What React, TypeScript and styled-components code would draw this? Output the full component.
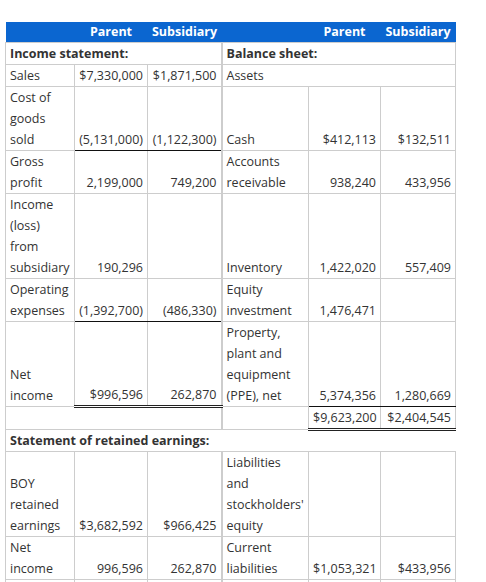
import React from 'react';
import styled, { createGlobalStyle } from 'styled-components';

type Rule = 'single' | 'double' | undefined;

type Line = { label: string; parent: string; sub: string; rule?: Rule };
type Side =
  | { kind: 'line'; line: Line }
  | { kind: 'section'; text: string; open?: boolean }
  | { kind: 'span'; text: string }
  | { kind: 'none' };

const line = (label: string, parent: string, sub: string, rule?: Rule): Side => ({
  kind: 'line',
  line: { label, parent, sub, rule },
});

const rows: { left: Side; right: Side }[] = [
  { left: { kind: 'section', text: 'Income statement:' }, right: { kind: 'section', text: 'Balance sheet:' } },
  { left: line('Sales', '$7,330,000', '$1,871,500'), right: { kind: 'span', text: 'Assets' } },
  { left: line('Cost of goods sold', '(5,131,000)', '(1,122,300)', 'single'), right: line('Cash', '$412,113', '$132,511') },
  { left: line('Gross profit', '2,199,000', '749,200'), right: line('Accounts receivable', '938,240', '433,956') },
  { left: line('Income (loss) from subsidiary', '190,296', ''), right: line('Inventory', '1,422,020', '557,409') },
  { left: line('Operating expenses', '(1,392,700)', '(486,330)', 'single'), right: line('Equity investment', '1,476,471', '') },
  {
    left: line('Net income', '$996,596', '262,870', 'double'),
    right: line('Property, plant and equipment (PPE), net', '5,374,356', '1,280,669', 'single'),
  },
  { left: { kind: 'span', text: '' }, right: line('', '$9,623,200', '$2,404,545', 'double') },
  { left: { kind: 'section', text: 'Statement of retained earnings:', open: true }, right: { kind: 'none' } },
  { left: line('BOY retained earnings', '$3,682,592', '$966,425'), right: line("Liabilities and stockholders' equity", '', '') },
  { left: line('Net income', '996,596', '262,870'), right: line('Current liabilities', '$1,053,321', '$433,956') },
  // next row starts right at the fold; only its borders show
  { left: line('', '', ''), right: line('', '', '') },
];

const widths = [69, 73, 74, 87, 72, 75];

function renderSide(side: Side, split: boolean, key: string) {
  switch (side.kind) {
    case 'section':
      return (
        <SectionCell key={key} colSpan={3} $split={split} $open={side.open}>
          {side.text}
        </SectionCell>
      );
    case 'span':
      return (
        <LabelCell key={key} colSpan={3} $split={split}>
          {side.text}
        </LabelCell>
      );
    case 'none':
      return null;
    default:
      return [
        <LabelCell key={key + 'l'} $split={split}>
          {side.line.label}
        </LabelCell>,
        <NumCell key={key + 'p'} $rule={side.line.rule}>
          {side.line.parent}
        </NumCell>,
        <NumCell key={key + 's'} $rule={side.line.rule}>
          {side.line.sub}
        </NumCell>,
      ];
  }
}

export default function App() {
  return (
    <>
      <GlobalStyle />
      <Page>
        <Sheet>
          <colgroup>
            {widths.map((w, i) => (
              <Col key={i} $w={w} />
            ))}
          </colgroup>
          <thead>
            <tr>
              <HeadCell />
              <HeadCell>Parent</HeadCell>
              <HeadCell>Subsidiary</HeadCell>
              <HeadCell />
              <HeadCell>Parent</HeadCell>
              <HeadCell>Subsidiary</HeadCell>
            </tr>
          </thead>
          <tbody>
            {rows.map((row, i) => (
              <Row key={i}>
                {renderSide(row.left, false, `${i}a`)}
                {renderSide(row.right, true, `${i}b`)}
              </Row>
            ))}
          </tbody>
        </Sheet>
      </Page>
    </>
  );
}

const GlobalStyle = createGlobalStyle`
  body {
    margin: 0;
    background: #fff;
    font-family: "Open Sans", "DejaVu Sans", sans-serif;
  }
`;

const Page = styled.div`
  padding: 22px 0 0 5px;
`;

const Sheet = styled.table`
  border-collapse: collapse;
  table-layout: fixed;
  width: 450px;
  font-size: 12.5px;
  line-height: 21px;
  color: #333;
`;

const Col = styled.col<{ $w: number }>`
  width: ${(p) => p.$w}px;
`;

const Row = styled.tr`
  height: 22px;
`;

const HeadCell = styled.th`
  background: #0b66d0;
  color: #fff;
  font-weight: 700;
  text-align: center;
  line-height: 20px;
  padding: 0 4px;
  border: none;
  white-space: nowrap;
`;

const Cell = styled.td`
  padding: 0 4px;
  vertical-align: bottom;
  border: 1px solid #cdcdcd;
`;

const LabelCell = styled(Cell)<{ $split?: boolean }>`
  text-align: left;
  border-left: ${(p) => (p.$split ? '2px solid #cdcdcd' : '1px solid #cdcdcd')};
`;

const SectionCell = styled(LabelCell)<{ $open?: boolean }>`
  font-weight: 700;
  ${(p) => (p.$open ? 'border-right: none;' : '')}
`;

const NumCell = styled(Cell)<{ $rule?: Rule }>`
  text-align: right;
  white-space: nowrap;
  ${(p) => p.$rule === 'single' && 'border-bottom: 1px solid #111;'}
  ${(p) => p.$rule === 'double' && 'border-bottom: 3px double #222;'}
`;
